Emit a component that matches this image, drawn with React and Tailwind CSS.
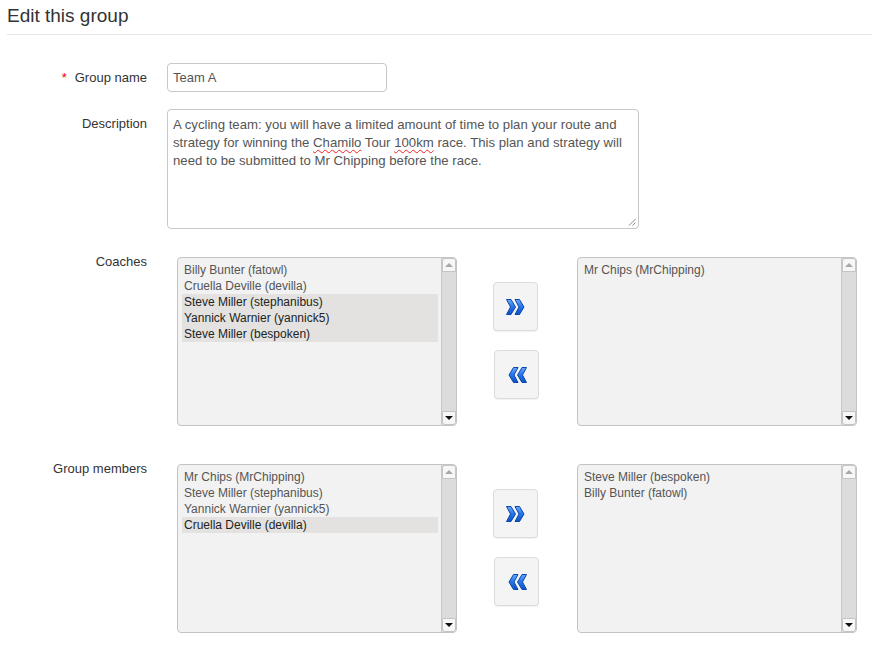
import React from 'react';

const coachesLeft = [
    { name: 'Billy Bunter (fatowl)' },
    { name: 'Cruella Deville (devilla)' },
    { name: 'Steve Miller (stephanibus)', selected: true },
    { name: 'Yannick Warnier (yannick5)', selected: true },
    { name: 'Steve Miller (bespoken)', selected: true },
];
const coachesRight = [{ name: 'Mr Chips (MrChipping)' }];

const membersLeft = [
    { name: 'Mr Chips (MrChipping)' },
    { name: 'Steve Miller (stephanibus)' },
    { name: 'Yannick Warnier (yannick5)' },
    { name: 'Cruella Deville (devilla)', selected: true },
];
const membersRight = [
    { name: 'Steve Miller (bespoken)' },
    { name: 'Billy Bunter (fatowl)' },
];

// Double chevron, drawn to look like the old glossy blue icon
const Chevrons = ({ dir }) => {
    const flip = dir === 'left' ? 'scale(-1,1) translate(-22,0)' : undefined;
    return (
        <svg width="22" height="18" viewBox="0 0 22 18">
            <defs>
                <linearGradient id={`g-${dir}`} x1="0" y1="0" x2="0" y2="1">
                    <stop offset="0" stopColor="#6aaaff" />
                    <stop offset="0.45" stopColor="#2a78ee" />
                    <stop offset="1" stopColor="#0d52c4" />
                </linearGradient>
            </defs>
            <g transform={flip}>
                <polygon
                    points="1.5,1.5 6,1.5 10.5,9 6,16.5 1.5,16.5 5.5,9"
                    fill={`url(#g-${dir})`}
                    stroke="#0b47a8"
                    strokeWidth="1"
                    strokeLinejoin="round"
                />
                <polygon
                    points="10,1.5 14.5,1.5 19,9 14.5,16.5 10,16.5 14,9"
                    fill={`url(#g-${dir})`}
                    stroke="#0b47a8"
                    strokeWidth="1"
                    strokeLinejoin="round"
                />
            </g>
        </svg>
    );
};

const Scrollbar = () => (
    <div className="flex flex-col w-[15px] h-full border-l border-[#c8c8c8] bg-[#dcdcdc]">
        <div className="h-[14px] flex items-center justify-center bg-[#f7f7f7] border border-[#c4c4c4] rounded-t-[3px]">
            <div className="w-0 h-0 border-l-[4px] border-r-[4px] border-b-[4px] border-l-transparent border-r-transparent border-b-[#a8a8a8]" />
        </div>
        <div className="flex-1" />
        <div className="h-[14px] flex items-center justify-center bg-[#f7f7f7] border border-[#c4c4c4] rounded-b-[3px]">
            <div className="w-0 h-0 border-l-[4px] border-r-[4px] border-t-[4px] border-l-transparent border-r-transparent border-t-[#111]" />
        </div>
    </div>
);

const ListBox = ({ items }) => (
    <div className="flex w-[280px] h-[169px] bg-[#f2f2f2] border border-[#c4c4c4] rounded-[4px] overflow-hidden">
        <div className="flex-1 pt-[4px] pl-[4px] pr-[3px]">
            {items.map((item, i) => (
                <div
                    key={i}
                    className={
                        item.selected
                            ? 'h-[16px] leading-[16px] pl-[2px] text-[12px] text-[#222] bg-[#e3e2e0]'
                            : 'h-[16px] leading-[16px] pl-[2px] text-[12px] text-[#555]'
                    }
                >
                    {item.name}
                </div>
            ))}
        </div>
        <Scrollbar />
    </div>
);

const MoveButton = ({ dir, className }) => (
    <button
        className={
            'w-[45px] h-[49px] flex items-center justify-center bg-[#f4f4f4] border border-[#dcdcdc] rounded-[4px] shadow-[0_1px_1px_rgba(0,0,0,0.06)] ' +
            className
        }
    >
        <Chevrons dir={dir} />
    </button>
);

const DualSelect = ({ left, right }) => (
    <div className="flex ml-[10px]">
        <ListBox items={left} />
        <div className="w-[120px] flex flex-col items-start pt-[25px] gap-[19px]">
            <MoveButton dir="right" className="ml-[36px]" />
            <MoveButton dir="left" className="ml-[37px]" />
        </div>
        <ListBox items={right} />
    </div>
);

const Label = ({ children, className = '' }) => (
    <div className={'w-[147px] shrink-0 text-right text-[13px] text-[#333] ' + className}>{children}</div>
);

const App = () => {
    return (
        <div className="w-[872px] min-h-[647px] bg-white font-['Liberation_Sans',Arial,sans-serif]">
            {/* Page heading */}
            <div className="ml-[7px] h-[35px] border-b border-[#e5e5e5] pt-[4px]">
                <h1 className="text-[19px] leading-[24px] text-[#333]">Edit this group</h1>
            </div>

            <div className="flex flex-col">
                {/* Group name */}
                <div className="flex mt-[28px]">
                    <Label className="leading-[28px] pt-[1px]">
                        <span className="text-[#e00] mr-[8px]">*</span>Group name
                    </Label>
                    <div className="ml-[20px]">
                        <div className="w-[220px] h-[29px] px-[5px] border border-[#c8c8c8] rounded-[4px] text-[13px] leading-[27px] text-[#555]">
                            Team A
                        </div>
                    </div>
                </div>

                {/* Description */}
                <div className="flex mt-[17px]">
                    <Label className="pt-[6px] leading-[18px]">Description</Label>
                    <div className="ml-[20px]">
                        <div className="relative w-[472px] h-[120px] px-[5px] py-[6px] border border-[#c8c8c8] rounded-[4px] text-[13.2px] leading-[18px] text-[#555]">
                            A cycling team: you will have a limited amount of time to plan your route and strategy for winning the{' '}
                            <span className="underline decoration-wavy decoration-[#e22] decoration-1 underline-offset-2">Chamilo</span> Tour{' '}
                            <span className="underline decoration-wavy decoration-[#e22] decoration-1 underline-offset-2">100km</span> race. This plan and strategy will need to be submitted to Mr Chipping before the race.
                            <svg className="absolute right-[2px] bottom-[2px]" width="8" height="8" viewBox="0 0 8 8">
                                <line x1="1" y1="7.5" x2="7.5" y2="1" stroke="#888" strokeWidth="1" />
                                <line x1="4.5" y1="7.5" x2="7.5" y2="4.5" stroke="#888" strokeWidth="1" />
                            </svg>
                        </div>
                    </div>
                </div>

                {/* Coaches */}
                <div className="flex mt-[24px]">
                    <Label className="leading-[18px]">Coaches</Label>
                    <div className="ml-[20px] pt-[4px]">
                        <DualSelect left={coachesLeft} right={coachesRight} />
                    </div>
                </div>

                {/* Group members */}
                <div className="flex mt-[34px]">
                    <Label className="leading-[18px]">Group members</Label>
                    <div className="ml-[20px] pt-[4px]">
                        <DualSelect left={membersLeft} right={membersRight} />
                    </div>
                </div>
            </div>
        </div>
    );
};

export default App;
